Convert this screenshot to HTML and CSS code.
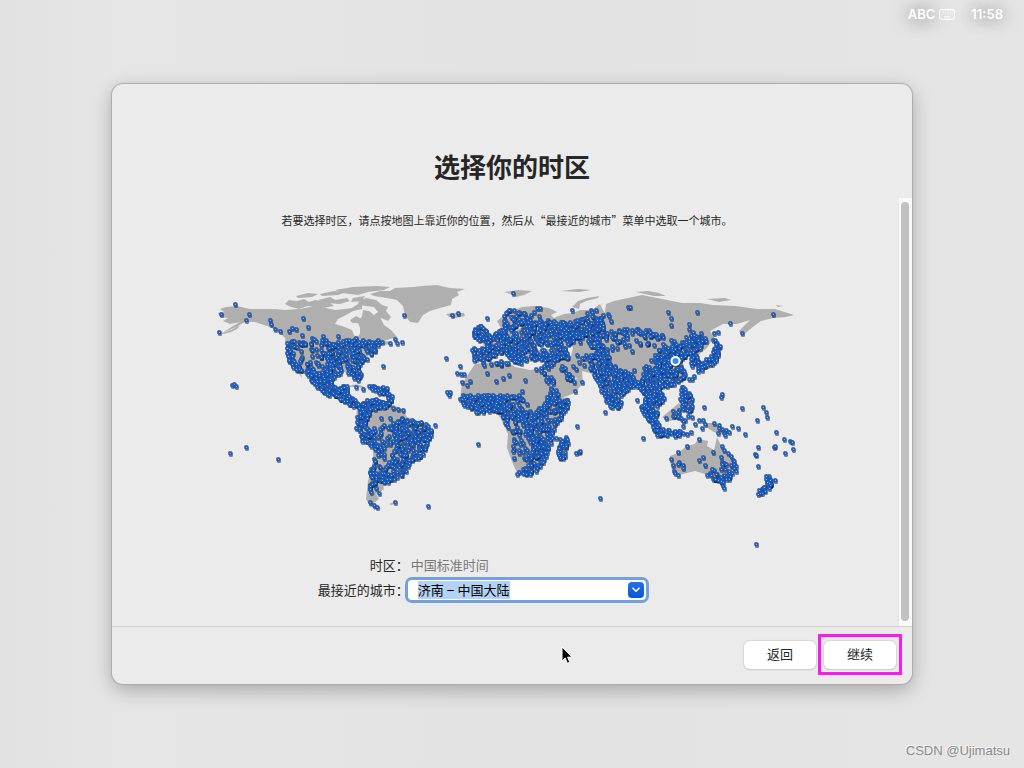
FILE: index.html
```html
<!DOCTYPE html>
<html lang="zh-CN">
<head>
  <meta charset="UTF-8">
  <title>选择你的时区</title>
  <meta name="viewport" content="width=device-width,initial-scale=1">
  <link rel="stylesheet" href="styles.css">
</head>
<body>

<header class="menubar">
  <span class="input-source">ABC
    <svg width="16" height="11" viewBox="0 0 16 11" aria-hidden="true">
      <rect x=".6" y=".6" width="14.8" height="9.6" rx="1.6" fill="none" stroke="#fff" stroke-width="1.1"/>
      <path d="M2.5 3h11M2.5 5.2h11" stroke="#fff" stroke-dasharray="1 .7" opacity=".75"/>
      <path d="M5 7.9h6" stroke="#fff" stroke-width="1.2"/>
    </svg>
  </span>
  <time>11:58</time>
</header>

<main class="desktop">
  <section class="window">
    <h1>选择你的时区</h1>

    <div class="scroll-area">
      <div class="content">
        <p class="hint">若要选择时区，请点按地图上靠近你的位置，然后从“最接近的城市”菜单中选取一个城市。</p>

        <svg class="map" viewBox="205 270 600 280" role="img" aria-label="世界地图">
          <g class="land">
            <!-- North America -->
            <polygon points="218,312 224,311 220,308 226,306 237,305 250,308 264,308 275,308 285,309 300,308 310,306 318,304 326,307 335,309 345,308 352,307 358,303 362,303 362,308 353,310 346,314 338,318 335,323 342,325 352,329 354,334 357,336 360,333 360,327 358,322 362,315 363,309 369,310 374,314 380,316 384,324 391,329 397,336 390,338 384,340 392,341 386,344 378,342 375,349 366,357 358,366 362,376 357,377 352,372 344,371 335,373 332,378 332,385 337,388 344,384 348,385 345,393 351,399 357,402 363,404 360,407 350,404 335,394 318,389 312,379 302,368 296,365 288,358 286,345 285,337 279,331 272,327 264,324 255,321 245,321 236,326 222,332 233,325 240,321 230,323 223,320 228,317 220,316"/>
            <polygon points="285,303 289,299 297,300 304,298 309,301 315,299 329,301 334,305 322,307 308,305 299,308 291,306"/>
            <polygon points="296,295 308,292 318,293 312,296 298,297"/>
            <polygon points="318,299 330,296 335,299 347,297 350,300 340,303 327,302"/>
            <polygon points="320,293 334,290 346,291 338,294 322,295"/>
            <polygon points="335,289 353,286 377,285 390,286 384,289 368,291 358,294 342,292"/>
            <polygon points="353,297 365,295 362,300 351,301"/>
            <polygon points="358,301 366,297 376,299 382,304 388,306 386,310 391,316 388,320 381,317 374,314 378,311 374,306 366,305 359,304"/>
            <polygon points="350,319 356,315 364,319 361,322 352,322"/>
            <polygon points="370,293 380,290 390,290 395,287 413,286 422,285 437,284 450,287 465,288 457,291 459,294 452,298 451,304 440,307 430,310 423,314 418,322 410,321 405,314 403,305 397,299 387,297 374,295"/>
            <polygon points="446,313 454,312 464,312 465,315 456,317 449,316"/>
            <path d="M350 385q8-4 17 3l-5-1q-5-2-12-1zM222 332q14-4 18-9l-2 4q-6 5-16 6zM290 362l9 11 3 4-1-5-7-10z"/>
            <!-- South America -->
            <polygon points="357,405 365,400 377,397 390,402 403,409 407,416 425,422 433,430 430,438 427,445 422,456 412,459 405,472 395,480 383,483 384,488 376,493 379,498 374,502 378,508 370,506 366,498 368,480 373,460 373,445 363,438 356,423"/>
            <polygon points="374,506 382,508 374,509"/>
            <polygon points="389,503 394,501 396,503 391,504"/>
            <!-- Africa -->
            <polygon points="475,363 500,360 506,360 515,366 530,369 545,367 550,376 555,390 558,396 570,397 565,411 553,424 553,440 545,455 540,467 531,473 518,474 513,463 507,447 508,433 502,420 497,412 487,410 475,411 467,407 460,397 462,383 467,375"/>
            <polygon points="558,443 567,435 570,440 564,458 558,459"/>
            <!-- Europe -->
            <polygon points="472,348 485,347 482,341 496,332 501,327 497,320 507,312 522,306 534,305 549,307 557,311 551,314 554,317 564,313 573,312 580,309 592,309 600,303 603,309 605,312 606,303 614,300 628,297 642,294 662,298 682,302 700,302 713,304 735,305 757,308 775,308 794,314 786,316 773,317 761,320 754,325 742,335 739,330 750,319 737,323 723,323 710,330 714,336 707,347 697,355 699,363 692,364 690,352 680,354 681,363 684,376 670,385 660,388 663,400 655,408 660,417 656,421 648,408 643,392 635,383 623,393 617,405 612,406 605,393 600,381 590,372 582,370 583,382 575,392 559,398 555,390 545,373 545,360 530,361 520,358 507,350 500,350 497,352 488,357 482,361 472,358"/>
            <polygon points="472,334 475,328 482,323 489,333 490,338 477,339"/>
            <polygon points="572,306 578,300 587,297 599,295 598,297 586,300 580,303 579,308"/>
            <polygon points="504,291 518,289 532,290 524,294 516,296 511,293"/>
            <polygon points="560,290 578,288 591,289 579,291"/>
            <polygon points="636,291 648,290 659,292 666,295 654,295"/>
            <polygon points="707,298 725,297 731,299 719,301"/>
            <polygon points="776,304 783,305 778,306"/>
            <!-- Japan and the islands -->
            <polygon points="697,365 710,359 715,347 721,345 718,357 705,366 698,369"/>
            <polygon points="713,331 716,347 714,344"/>
            <polygon points="640,407 645,406 657,426 670,430 691,432 690,435 657,430"/>
            <polygon points="662,416 679,402 684,407 676,419 668,420"/>
            <polygon points="681,387 686,388 693,402 691,411 683,409"/>
            <polygon points="702,422 714,422 721,427 727,435 714,431 709,428"/>
            <!-- Australia and New Zealand -->
            <polygon points="670,455 678,452 687,445 695,443 698,438 708,440 707,445 714,449 717,436 722,447 728,452 736,461 735,470 728,477 720,482 712,478 705,473 695,470 679,474 673,474 671,465"/>
            <polygon points="767,474 771,477 774,480 769,486 760,492 757,492 768,482"/>
          </g>
          <g class="sea">
            <polygon points="533,349 535,345 540,346 546,344 552,348 541,349"/>
            <polygon points="566,346 571,343 573,347 571,355 567,353"/>
            <polygon points="514,327 521,322 523,325 516,330"/>
            <polygon points="545,373 548,378 556,393 554,393"/>
            <polygon points="562,366 568,373 578,378 571,378"/>
          </g>
          <g id="cities"></g>
          <g class="picked">
            <circle cx="675.5" cy="360" r="5"/>
            <circle cx="675.5" cy="360" r="3"/>
          </g>
        </svg>

        <form class="zone-form">
          <label for="zone">时区：</label>
          <output id="zone">中国标准时间</output>
          <label for="city">最接近的城市：</label>
          <div class="combobox">
            <input id="city" value="济南 – 中国大陆" autocomplete="off">
            <button type="button" aria-label="显示城市">
              <svg width="10" height="6" viewBox="0 0 10 6"><path d="M2 1.2l3 3 3-3" fill="none" stroke="#fff" stroke-width="1.6" stroke-linecap="round" stroke-linejoin="round"/></svg>
            </button>
          </div>
        </form>
      </div>
      <div class="scrollbar"><div class="thumb"></div></div>
    </div>

    <footer class="actions">
      <button type="button">返回</button>
      <div class="marked"><button type="button">继续</button></div>
    </footer>

    <svg class="cursor" width="12" height="19" viewBox="0 0 12 19" aria-hidden="true">
      <path d="M1 1v14l3.2-3 2.2 5.3 2.4-1-2.2-5.1H11z" fill="#000" stroke="#fff"/>
    </svg>
  </section>
</main>

<footer class="credit">CSDN @Ujimatsu</footer>

<script src="map.js"></script>
</body>
</html>
```
FILE: styles.css
```css
* {
  box-sizing: border-box;
}
body {
  margin: 0;
  min-height: 100vh;
  display: flex;
  flex-direction: column;
  background: linear-gradient(90deg, #e2e2e2, #e6e6e6 12%, #e3e3e3 50%, #e5e5e5);
  color: #262626;
  font: 13px/20px "Noto Sans CJK SC", sans-serif;
}
button, input {
  font: inherit;
  color: inherit;
}

.menubar {
  height: 34px;
  padding: 4px 21px 0 0;
  display: flex;
  align-items: flex-start;
  justify-content: flex-end;
  gap: 16px;
  color: #fff;
  font-family: Inter, sans-serif;
  font-weight: 600;
  text-shadow: 0 0 14px #999, 0 2px 20px #999;
}
.input-source {
  display: flex;
  align-items: center;
  gap: 4px;
}

.desktop {
  flex: 1;
  display: flex;
  align-items: center;
  justify-content: center;
  padding: 0 24px;
}
.window {
  position: relative;
  width: 100%;
  max-width: 800px;
  min-height: 600px;
  display: flex;
  flex-direction: column;
  background: #ebebeb;
  border-radius: 11px;
  box-shadow: 0 0 1px 1px #aaa, 0 6px 20px rgba(0, 0, 0, 0.28);
}
h1 {
  margin: 0;
  padding: 62px 0 12px;
  font-size: 26px;
  line-height: 40px;
  font-weight: 700;
  text-align: center;
}

.scroll-area {
  flex: 1;
  display: flex;
}
.content {
  flex: 1;
  min-width: 0;
}
.hint {
  margin: 12px 0 41px;
  padding-left: 4px;
  font-size: 11px;
  text-align: center;
}
.map {
  display: block;
  width: 100%;
  max-width: 600px;
  margin: 0 auto;
}
.land {
  fill: #afafaf;
}
.sea {
  fill: #ebebeb;
}
.city-shadow {
  fill: #06132e;
  opacity: 0.5;
}
.city {
  fill: #2364c8;
  stroke: #16489b;
  stroke-width: 0.5;
}
.city-light {
  fill: #7fb2f6;
}
.picked circle:first-child {
  fill: #fff;
}
.picked circle:last-child {
  fill: #3c89f6;
}

.zone-form {
  display: grid;
  grid-template-columns: 38% 1fr;
  row-gap: 5px;
  align-items: center;
  padding-top: 4px;
}
.zone-form label {
  padding-right: 2px;
  text-align: right;
}
output {
  color: #777;
}
.combobox {
  width: 238px;
  height: 20px;
  margin-left: -3px;
  padding: 1px 2px 1px 0;
  display: flex;
  align-items: center;
  background: #fff;
  border-radius: 4px;
  box-shadow: 0 0 0 3px #75a0df;
}
.combobox input {
  flex: 1;
  min-width: 0;
  height: 18px;
  padding: 0 0 0 10px;
  border: 0;
  outline: 0;
  background: none;
  color: #000;
  font-family: Inter, "Noto Sans CJK SC", sans-serif;
  line-height: 18px;
}
.combobox input::selection {
  background: #b3d2f4;
  color: #000;
}
.combobox button {
  width: 16px;
  height: 16px;
  padding: 0;
  display: flex;
  align-items: center;
  justify-content: center;
  border: 0;
  border-radius: 4px;
  background: linear-gradient(#2471e6, #0755d4);
}

.scrollbar {
  width: 14px;
  padding: 4px 3px 5px 2px;
  background: #fafafa;
  border-left: 1px solid #e4e4e4;
}
.thumb {
  width: 8px;
  height: 100%;
  border-radius: 4px;
  background: #c1c1c1;
}

.actions {
  height: 58px;
  padding: 0 10px 2px;
  display: flex;
  align-items: center;
  justify-content: flex-end;
  gap: 2px;
  border-top: 1px solid #d1d1d1;
}
.actions button {
  display: block;
  width: 72px;
  height: 28px;
  padding: 0 0 2px;
  border: 0;
  border-radius: 6px;
  background: #fff;
  box-shadow: 0 0 1px 1px #d6d6d6, 0 1px 1px #aaa;
}
.marked {
  padding: 4px 3px 3px;
  border: 3px solid #f61cf0;
}
.cursor {
  position: absolute;
  left: 449px;
  top: 562px;
}

.credit {
  height: 34px;
  padding: 7px 14px 0 0;
  color: #8a8a8a;
  font-family: "Liberation Sans", sans-serif;
  text-align: right;
  text-shadow: -1px -1px 0 #f8f8f8;
}
```
FILE: map.js
```js
// areas full of cities: [share of grid cells used, outline]
const regions = [
  [0.42, '286,338 303,333 330,338 330,377 320,388 300,368 288,357'],
  [0.88, '328,345 345,340 362,341 381,340 375,349 366,357 358,365 361,376 357,378 352,371 335,373 330,378'],
  [0.95, '288,343 290,357 300,367 298,369 288,358'],
  [0.16, '290,331 345,334 370,338 340,344 290,340'],
  [0.95, '306,368 330,375 332,384 337,389 343,384 348,385 346,393 357,402 363,403 360,407 350,404 335,394 320,389'],
  [0.88, '370,386 376,385 388,388 391,396 389,402 386,401 387,392 372,389'],
  [0.95, '364,401 377,398 388,403 384,406 370,408 364,422 375,440 380,447 372,444 361,437 357,423'],
  [0.85, '403,417 425,423 432,430 426,445 421,456 410,459 404,471 395,478 383,480 375,478 385,467 392,457 398,440 395,425'],
  [0.42, '365,425 402,420 402,445 380,447'],
  [0.45, '374,445 385,445 384,480 382,485 370,490 369,478'],
  [0.8, '370,470 375,470 372,490 369,489'],
  [0.95, '473,334 475,328 482,325 488,332 490,338 478,338'],
  [0.95, '485,342 498,330 525,320 565,322 600,316 604,328 575,336 563,347 569,356 545,359 532,356 530,350 522,350 526,360 521,358 513,349 507,347 512,352 520,361 515,361 505,350 497,352 487,358 474,358 473,348 487,348'],
  [0.6, '470,371 479,361 508,359 509,365 495,365 475,369'],
  [0.55, '497,320 510,308 525,311 540,306 543,313 555,322 535,325 505,327'],
  [0.2, '555,317 610,308 605,345 570,340'],
  [0.88, '460,397 463,394 475,396 500,396 505,410 487,409 475,410 467,406'],
  [0.85, '475,395 520,395 530,410 520,416 500,411'],
  [0.6, '500,413 530,409 530,438 510,438 508,428'],
  [0.85, '532,411 545,405 549,393 560,400 568,399 564,412 553,424 552,442 535,446 530,434'],
  [0.3, '509,437 532,440 528,458 516,468'],
  [0.88, '533,445 549,445 545,454 540,466 530,472 517,472 527,467'],
  [0.88, '559,443 566,437 568,441 564,456 558,458'],
  [0.75, '535,367 545,364 551,358 555,362 547,368 558,388 562,398 556,396 542,374'],
  [0.6, '555,361 562,363 573,376 583,381 581,385 568,380'],
  [0.15, '563,346 590,345 592,368 575,372'],
  [0.3, '565,335 600,330 650,325 662,340 640,347 600,350'],
  [0.6, '617,327 655,325 664,336 655,338 630,332 602,340 600,334'],
  [0.8, '585,338 608,350 608,355 588,345'],
  [0.95, '590,355 604,346 611,365 630,373 637,380 632,384 622,393 618,405 611,406 600,383 591,368'],
  [0.7, '640,370 655,354 668,350 668,375 645,380'],
  [0.95, '663,353 675,343 690,341 697,335 706,339 697,348 687,352 679,361 685,376 670,384 660,387 663,400 656,404 648,395 643,392 636,382 655,370'],
  [0.25, '645,350 658,340 695,330 708,330 706,340 670,350'],
  [0.95, '691,356 697,354 699,362 693,364'],
  [0.95, '697,365 709,358 714,347 718,347 716,359 705,366 698,369'],
  [0.8, '713,339 718,338 721,347 715,348'],
  [0.95, '640,406 646,406 659,424 655,428'],
  [0.95, '645,396 650,402 657,413 653,417 645,404'],
  [0.95, '656,428 670,429 680,430 680,434 660,433'],
  [0.6, '663,415 674,409 680,402 684,406 678,418 674,422 672,414 665,418'],
  [0.95, '681,387 686,388 692,400 691,410 684,407 681,398'],
  [0.6, '678,418 686,415 684,428 680,427'],
  [0.85, '713,478 722,477 729,472 733,461 736,466 734,472 722,482'],
  [0.3, '708,470 728,457 733,462 722,477'],
  [0.88, '766,476 774,480 769,486 760,492 757,492 768,482']
];

// water left clear inside the areas above
const seas = ['533,345 547,344 551,348 540,349', '514,326 522,322 523,326 516,330', '496,353 505,351 507,355 498,357'];

const cities = `235,303 221,313 219,331 249,313 246,319 270,319 271,323 275,328 280,330 303,317
 308,326 292,327 296,328 289,330 232,384 234,383 236,385 230,452 246,446 278,458 404,314 452,314 458,312
 513,292 487,317 446,357 383,365 402,341 390,342 397,342 395,338 460,365 457,372 461,373 464,373 447,391
 450,391 449,394 356,386 363,388 470,380 467,384 462,381 487,372 496,380 503,377 509,374 525,379 522,390
 478,443 435,424 393,407 398,408 403,409 390,417 381,417 370,501 374,504 377,506 395,501 428,505 371,491
 379,492 577,425 576,452 579,451 580,450 556,437 560,438 567,399 575,390 606,400 605,411 637,399 600,497
 628,306 630,306 668,311 671,317 671,324 697,311 689,323 689,328 693,331 730,322 742,332 773,313 714,332
 718,331 713,339 689,378 694,375 692,378 722,393 721,396 704,406 742,407 763,406 757,419 766,411 767,416
 776,431 784,438 790,440 792,441 785,452 793,448 774,446 775,445 758,446 755,453 756,454 758,465 643,437
 657,434 688,415 692,416 699,419 703,419 705,423 714,422 719,424 695,423 702,427 719,427 722,428 726,429
 729,431 732,425 738,427 745,433 718,432 724,432 725,434 691,431 687,433 683,432 699,438 687,445 678,451
 671,458 673,464 679,461 678,463 683,464 683,467 674,470 675,472 678,474 699,459 703,456 705,464 713,451
 722,445 724,449 728,452 721,456 731,455 733,459 723,485 724,487 707,474 710,472 711,474 769,475 768,477
 756,543 619,340 625,345 632,350 640,343 648,342 663,348 671,339 655,334 612,348 608,313 611,320 596,309
 591,309 572,309 634,369 644,367`.trim().split(/\s+/).map(p => p.split(',').map(Number));

let seed = 7;
function random() {
  seed = (seed * 16807) % 2147483647;
  return seed / 2147483647;
}

function parse(str) {
  return str.split(' ').map(p => p.split(',').map(Number));
}

function inside(x, y, poly) {
  let hit = false;
  for (let i = 0, j = poly.length - 1; i < poly.length; j = i++) {
    const [ax, ay] = poly[i];
    const [bx, by] = poly[j];
    if ((ay > y) !== (by > y) && x < (bx - ax) * (y - ay) / (by - ay) + ax) hit = !hit;
  }
  return hit;
}

const water = seas.map(parse);

function add(x, y) {
  if (!water.some(w => inside(x, y, w))) cities.push([x, y]);
}

regions.forEach(([share, outline]) => {
  const poly = parse(outline);
  const xs = poly.map(p => p[0]);
  const ys = poly.map(p => p[1]);
  for (let y = Math.min(...ys); y <= Math.max(...ys) + 1; y += 3) {
    for (let x = Math.min(...xs); x <= Math.max(...xs) + 1; x += 3) {
      const cx = Math.round(x + random() * 6 - 3);
      const cy = Math.round(y + random() * 6 - 3);
      if (random() < share && inside(cx, cy, poly)) add(cx, cy);
    }
  }
  if (share < 0.85) return;

  // crowded areas are filled roughly up to their edge
  poly.forEach(([ax, ay], i) => {
    const [bx, by] = poly[(i + 1) % poly.length];
    const steps = Math.ceil(Math.hypot(bx - ax, by - ay) / 3);
    for (let n = 0; n < steps; n++) {
      const x = ax + (bx - ax) * n / steps + random() * 3 - 1.5;
      const y = ay + (by - ay) * n / steps + random() * 3 - 1.5;
      if (random() < share) add(Math.round(x), Math.round(y));
    }
  });
});

// shadows go underneath every marker
const shadows = cities.map(([x, y]) => `<rect class="city-shadow" x="${x - 1}" y="${y - 1}" width="4" height="5" rx="1.5"/>`);
const dots = cities.map(([x, y]) => `<rect class="city" x="${x - 1.5}" y="${y - 1.5}" width="3.5" height="3.5" rx="1"/>
  <rect class="city-light" x="${x}" y="${y}" width="1" height="1"/>`);
document.getElementById('cities').innerHTML = shadows.join('') + dots.join('');

const city = document.getElementById('city');
city.focus();
city.select();
```
